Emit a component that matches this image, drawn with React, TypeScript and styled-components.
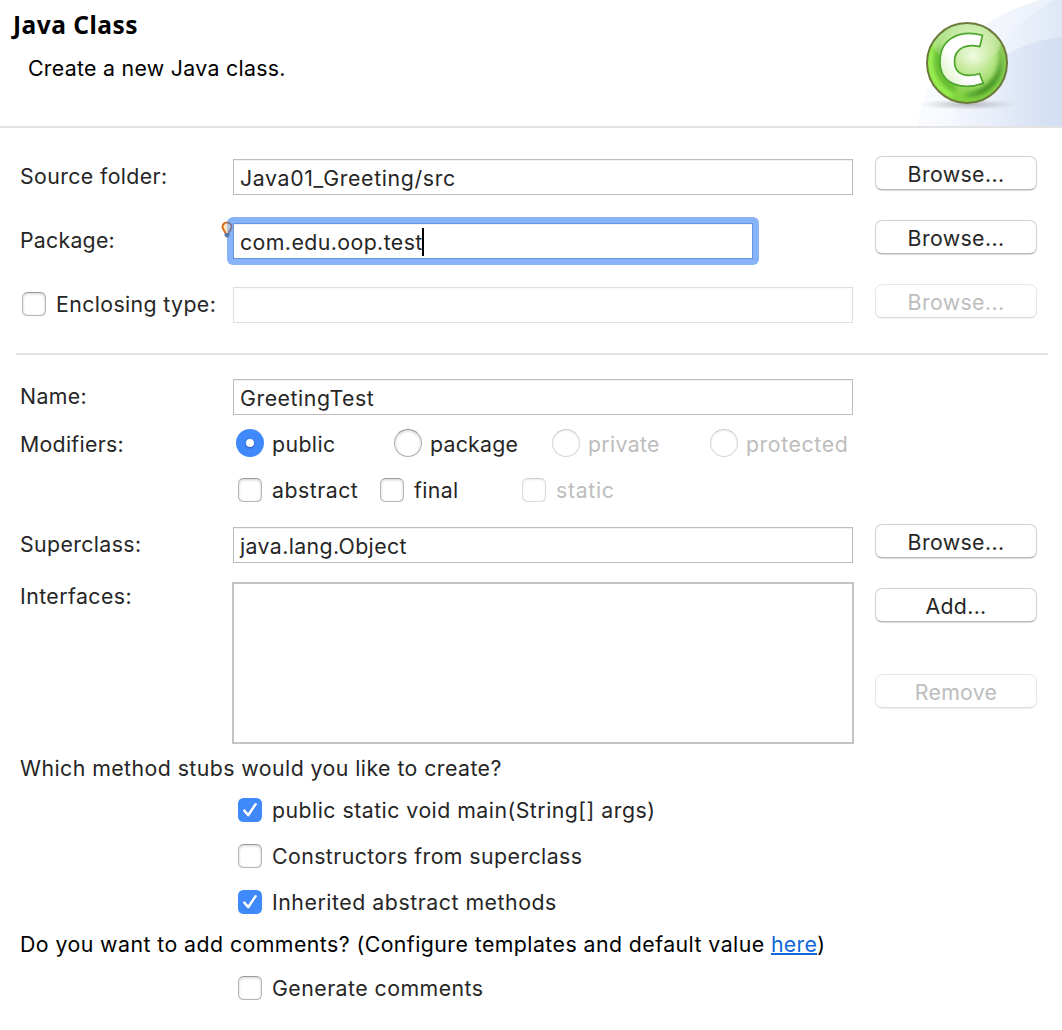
import React from "react";
import styled, { createGlobalStyle } from "styled-components";

const GlobalStyle = createGlobalStyle`
  *, *::before, *::after { box-sizing: border-box; }
  body {
    margin: 0;
    background: #ffffff;
    color: #262626;
    font-family: Inter, "Liberation Sans", sans-serif;
    font-size: 21.3px;
  }
`;

const Dialog = styled.main`
  width: 1062px;
  height: 1030px;
  overflow: hidden;
  background: #fff;
`;

const Header = styled.header`
  display: flex;
  justify-content: space-between;
  height: 128px;
  border-bottom: 2px solid #e3e3e3;
  color: #000;
`;

const Heading = styled.div`
  display: flex;
  flex-direction: column;
  gap: 14px;
  padding-top: 8px;
`;

const Title = styled.h1`
  margin: 0;
  padding-left: 13px;
  font: bold 24.5px/33px "Noto Sans", "Open Sans", sans-serif;
  letter-spacing: 0.5px;
`;

const Subtitle = styled.p`
  margin: 0;
  padding-left: 28px;
  line-height: 26px;
  letter-spacing: 0.3px;
`;

const Banner = styled.svg`
  display: block;
  width: 182px;
  height: 126px;
`;

const Form = styled.div`
  padding-top: 31px;
`;

const Row = styled.div<{ $height: number }>`
  display: grid;
  grid-template-columns: 213px 620px 184px;
  align-items: start;
  height: ${(p) => p.$height}px;
  padding-left: 20px;

  & > :nth-child(3) { margin-left: 22px; }
`;

const Label = styled.span<{ $track?: number; $shift?: number }>`
  margin-top: ${(p) => p.$shift ?? -1}px;
  line-height: 36px;
  letter-spacing: ${(p) => p.$track ?? 0.4}px;
  white-space: nowrap;
`;

const Field = styled.div<{ $track?: number; $disabled?: boolean }>`
  height: 36px;
  padding: 1px 6px 0;
  border: 1px solid ${(p) => (p.$disabled ? "#dfdfdf" : "#bdbdbd")};
  box-shadow: inset 0 1px 0 ${(p) => (p.$disabled ? "#fafafa" : "#f1f1f1")};
  line-height: 34px;
  letter-spacing: ${(p) => p.$track ?? 0.4}px;
  white-space: nowrap;
`;

const FocusRing = styled.div`
  position: relative;
  width: 532px;
  height: 48px;
  margin: -6px 0 0 -6px;
  padding: 6px;
  border-radius: 6px;
  background: #87b3f9;
`;

const FocusedField = styled(Field)`
  display: flex;
  border-color: #6795de;
  background: #fff;
`;

const Caret = styled.span`
  width: 2px;
  height: 28px;
  margin: 3px 0 0 -0.4px;
  background: #000;
`;

const Hint = styled.svg`
  position: absolute;
  left: -6px;
  top: 4px;
  width: 12px;
  height: 18px;
`;

const Button = styled.button<{ $track?: number }>`
  width: 162px;
  height: 34px;
  margin-top: -3px;
  padding: 0;
  border: 1px solid #d2d2d2;
  border-bottom-color: #b9b9b9;
  border-radius: 7px;
  background: #fff;
  box-shadow: 0 1px 1px rgba(0, 0, 0, 0.14);
  color: #262626;
  font: inherit;
  line-height: 34px;
  letter-spacing: ${(p) => p.$track ?? 0.37}px;

  &:disabled {
    border-color: #e7e7e7;
    border-bottom-color: #dcdcdc;
    box-shadow: 0 1px 1px rgba(0, 0, 0, 0.06);
    color: #bdbdbd;
  }
`;

const ButtonColumn = styled.div`
  display: flex;
  flex-direction: column;
  gap: 55px;
  padding-top: 9px;
`;

const Divider = styled.hr`
  height: 2px;
  margin: 2px 14px 24px 16px;
  border: 0;
  background: #e3e3e3;
`;

const ListBox = styled.div`
  height: 162px;
  margin: 0 -1px;
  border: 2px solid #c3c3c3;
`;

const Options = styled.div<{ $pitch: number; $inset: number }>`
  display: grid;
  grid-auto-flow: column;
  grid-auto-columns: ${(p) => p.$pitch}px;
  justify-content: start;
  padding-left: ${(p) => p.$inset}px;
`;

const Option = styled.label<{ $disabled?: boolean; $radio?: boolean; $track?: number }>`
  display: flex;
  align-items: flex-start;
  gap: ${(p) => (p.$radio ? 8 : 10)}px;
  color: ${(p) => (p.$disabled ? "#bdbdbd" : "inherit")};
  line-height: ${(p) => (p.$radio ? 30 : 24)}px;
  letter-spacing: ${(p) => p.$track ?? 0.42}px;
  white-space: nowrap;
`;

const EnclosingCell = styled.div`
  padding: 5px 0 0 2px;
`;

const Box = styled.span<{ $checked?: boolean; $disabled?: boolean }>`
  display: grid;
  place-items: center;
  flex: none;
  width: 24px;
  height: 24px;
  border: ${(p) => (p.$checked ? 0 : 1)}px solid ${(p) => (p.$disabled ? "#d9d9d9" : "#b5b5b5")};
  border-top-color: ${(p) => (p.$disabled ? "#cfcfcf" : "#9c9c9c")};
  border-radius: 5.5px;
  background: ${(p) => (p.$checked ? "#3f89fa" : "#fff")};
  box-shadow: ${(p) => (p.$checked ? "none" : p.$disabled ? "inset 0 1px 2px #eaeaea" : "inset 0 1px 3px #cfcfcf")};
`;

const Dot = styled.span<{ $checked?: boolean; $disabled?: boolean }>`
  display: flex;
  align-items: center;
  justify-content: center;
  flex: none;
  width: 28px;
  height: 28px;
  border: ${(p) => (p.$checked ? 0 : 1)}px solid ${(p) => (p.$disabled ? "#d6d6d6" : "#adadad")};
  border-top-color: ${(p) => (p.$disabled ? "#cccccc" : "#969696")};
  border-radius: 50%;
  background: ${(p) => (p.$checked ? "#3f89fa" : "#fff")};
  box-shadow: ${(p) => (p.$checked ? "none" : p.$disabled ? "inset 0 1px 2px #eaeaea" : "inset 0 1px 3px #cfcfcf")};

  &::after {
    content: "";
    width: 8px;
    height: 8px;
    border-radius: 50%;
    background: #fff;
    box-shadow: ${(p) => (p.$checked ? "0 1px 2px rgba(0, 40, 120, 0.5)" : "none")};
  }
`;

const Question = styled.p<{ $dark?: boolean; $track: number }>`
  margin: 0;
  padding-left: 20px;
  line-height: 24px;
  letter-spacing: ${(p) => p.$track}px;
  color: ${(p) => (p.$dark ? "#000" : "inherit")};
  white-space: nowrap;
`;

const Link = styled.a`
  color: #1068d8;
  letter-spacing: 0.28px;
  text-decoration: underline;
  text-decoration-thickness: 2px;
  text-underline-offset: 1px;
  text-decoration-skip-ink: none;
`;

const Stubs = styled.div`
  display: flex;
  flex-direction: column;
  gap: 22px;
  padding: 18px 0 18px 238px;
`;

const Comments = styled.div`
  padding: 20px 0 0 238px;
`;

const MethodArea = styled.section`
  padding-top: 12px;
`;

type OptionProps = { text: string; checked?: boolean; disabled?: boolean; track?: number };

function CheckOption({ text, checked, disabled, track }: OptionProps) {
  return (
    <Option $disabled={disabled} $track={track}>
      <Box $checked={checked} $disabled={disabled}>
        {checked && (
          <svg width="24" height="24" viewBox="0 0 24 24" fill="none">
            <path d="M6.3 13.4 10.2 18.2 17.8 7.2" stroke="#1f62c8" strokeOpacity=".4" strokeWidth="2.6" />
            <path d="M6.3 12.6 10.2 17.2 17.6 6.2" stroke="#fff" strokeWidth="2.5" strokeLinecap="round" strokeLinejoin="round" />
          </svg>
        )}
      </Box>
      <span>{text}</span>
    </Option>
  );
}

function RadioOption({ text, checked, disabled, track }: OptionProps) {
  return (
    <Option $radio $disabled={disabled} $track={track}>
      <Dot $checked={checked} $disabled={disabled} />
      <span>{text}</span>
    </Option>
  );
}

function ClassBanner() {
  return (
    <Banner viewBox="0 0 182 126">
      <defs>
        <linearGradient id="sky" x1="38" x2="182" y1="0" y2="0" gradientUnits="userSpaceOnUse">
          <stop offset="0" stopColor="#f9fbff" />
          <stop offset=".55" stopColor="#f3f6fd" />
          <stop offset="1" stopColor="#e9eff9" />
        </linearGradient>
        <linearGradient id="skyDeep" x1="70" x2="182" y1="0" y2="0" gradientUnits="userSpaceOnUse">
          <stop offset="0" stopColor="#d2def2" stopOpacity="0" />
          <stop offset="1" stopColor="#cedbf1" stopOpacity=".75" />
        </linearGradient>
        <linearGradient id="skyEdge" x1="120" x2="182" y1="0" y2="0" gradientUnits="userSpaceOnUse">
          <stop offset="0" stopColor="#dfe7f6" stopOpacity=".1" />
          <stop offset="1" stopColor="#d3dff3" stopOpacity=".5" />
        </linearGradient>
        <radialGradient id="ball" cx="93" cy="56" r="56" gradientUnits="userSpaceOnUse">
          <stop offset="0" stopColor="#eefadd" />
          <stop offset=".32" stopColor="#c0e894" />
          <stop offset=".62" stopColor="#8ed552" />
          <stop offset="1" stopColor="#70d02a" />
        </radialGradient>
        <linearGradient id="gloss" x1="0" x2="0" y1="22" y2="72" gradientUnits="userSpaceOnUse">
          <stop offset="0" stopColor="#fff" stopOpacity=".5" />
          <stop offset="1" stopColor="#fff" stopOpacity="0" />
        </linearGradient>
        <linearGradient id="letter" x1="60" x2="92" y1="70" y2="50" gradientUnits="userSpaceOnUse">
          <stop offset="0" stopColor="#def3ca" />
          <stop offset=".45" stopColor="#fff" />
        </linearGradient>
        <radialGradient id="shade">
          <stop offset="0" stopColor="#777" stopOpacity=".5" />
          <stop offset=".5" stopColor="#999" stopOpacity=".3" />
          <stop offset="1" stopColor="#aaa" stopOpacity="0" />
        </radialGradient>
        <filter id="soft" x="-30%" y="-30%" width="160%" height="160%">
          <feGaussianBlur stdDeviation="2.6" />
        </filter>
        <clipPath id="ballClip">
          <circle cx="87" cy="63" r="40" />
        </clipPath>
      </defs>
      <path d="M38 126C42 76 84 22 160 0H182V126Z" fill="url(#sky)" />
      <path d="M70 126C96 72 124 28 174 0H182V126Z" fill="url(#skyEdge)" />
      <path d="M60 126C78 84 120 44 182 37V126Z" fill="url(#skyDeep)" />
      <ellipse cx="88" cy="104.500" rx="50" ry="5.500" fill="url(#shade)" />
      <circle cx="87" cy="63" r="40" fill="url(#ball)" />
      <g clipPath="url(#ballClip)">
        <path d="M118 40C127 70 110 92 82 95C100 100 118 88 122 68C123 58 122 48 118 40Z" fill="#2b7d13" filter="url(#soft)" />
        <path d="M53 44C44 68 54 88 72 96" stroke="#9df553" strokeWidth="6" fill="none" filter="url(#soft)" />
        <path d="M60 46C54 66 60 82 76 90" stroke="#4fae20" strokeWidth="4" fill="none" filter="url(#soft)" />
        <ellipse cx="87" cy="43" rx="34" ry="21" fill="url(#gloss)" />
      </g>
      <circle cx="87" cy="63" r="40" fill="none" stroke="#6b7a3b" strokeWidth="2" />
      <path
        d="M102.5 35.3 99.8 46.6C88 43.6 74.5 47 74.5 61.5C74.5 75.5 87 77.5 99.6 73.7L103.3 83.4C85 89.7 60 87 60 61.5C60 38 80 29.5 102.5 35.3Z"
        fill="url(#letter)"
        stroke="#4da62b"
        strokeWidth="1.7"
        strokeLinejoin="round"
      />
    </Banner>
  );
}

function ContentAssistHint() {
  return (
    <Hint viewBox="0 0 12 18" fill="none">
      <path d="M6 2.2C3.800 2.200 2.200 3.800 2.200 6 2.200 8 4.500 8.500 4.600 12H6Z" fill="#ffe9c4" />
      <path d="M6 2.2C8.200 2.200 9.800 3.800 9.800 6 9.800 8 7.500 8.500 7.400 12H6Z" fill="#b4c6e6" />
      <path d="M4.200 12C4 9.500 1.500 8.600 1.500 6A4.500 4.500 0 0 1 6 1.500" stroke="#d96f1c" strokeWidth="2" />
      <path d="M7.800 12C8 9.500 10.500 8.600 10.500 6A4.500 4.500 0 0 0 6 1.500" stroke="#80798c" strokeWidth="2" />
      <path d="M3.600 12H8.400V14.500L6.800 16.500H5.200L3.600 14.500Z" fill="#56749f" />
    </Hint>
  );
}

export default function App() {
  return (
    <Dialog>
      <GlobalStyle />
      <Header>
        <Heading>
          <Title>Java Class</Title>
          <Subtitle>Create a new Java class.</Subtitle>
        </Heading>
        <ClassBanner />
      </Header>
      <Form>
        <Row $height={64}>
          <Label $track={0.39}>Source folder:</Label>
          <Field $track={0.65}>Java01_Greeting/src</Field>
          <Button>Browse...</Button>
        </Row>
        <Row $height={64}>
          <Label $track={0.24}>Package:</Label>
          <FocusRing>
            <FocusedField $track={0.42}>
              com.edu.oop.test
              <Caret />
            </FocusedField>
            <ContentAssistHint />
          </FocusRing>
          <Button>Browse...</Button>
        </Row>
        <Row $height={64}>
          <EnclosingCell>
            <CheckOption text="Enclosing type:" track={0.38} />
          </EnclosingCell>
          <Field $disabled />
          <Button disabled>Browse...</Button>
        </Row>
        <Divider />
        <Row $height={50}>
          <Label $track={0.36}>Name:</Label>
          <Field $track={0.55}>GreetingTest</Field>
        </Row>
        <Row $height={49}>
          <Label $track={0.29} $shift={-3}>Modifiers:</Label>
          <Options $pitch={158} $inset={3}>
            <RadioOption text="public" checked track={0.4} />
            <RadioOption text="package" track={0.24} />
            <RadioOption text="private" disabled track={0.32} />
            <RadioOption text="protected" disabled track={0.58} />
          </Options>
        </Row>
        <Row $height={49}>
          <span />
          <Options $pitch={142} $inset={5}>
            <CheckOption text="abstract" track={0.5} />
            <CheckOption text="final" track={0.34} />
            <CheckOption text="static" disabled track={0.66} />
          </Options>
        </Row>
        <Row $height={55}>
          <Label $track={0.38}>Superclass:</Label>
          <Field $track={0.38}>java.lang.Object</Field>
          <Button>Browse...</Button>
        </Row>
        <Row $height={162}>
          <Label $track={0.43} $shift={-4}>Interfaces:</Label>
          <ListBox />
          <ButtonColumn>
            <Button $track={0.33}>Add...</Button>
            <Button $track={0.28} disabled>Remove</Button>
          </ButtonColumn>
        </Row>
        <MethodArea>
          <Question $track={0.44}>Which method stubs would you like to create?</Question>
          <Stubs>
            <CheckOption text="public static void main(String[] args)" checked track={0.475} />
            <CheckOption text="Constructors from superclass" track={0.43} />
            <CheckOption text="Inherited abstract methods" checked track={0.53} />
          </Stubs>
          <Question $dark $track={0.441}>
            Do you want to add comments? (Configure templates and default value <Link>here</Link>)
          </Question>
          <Comments>
            <CheckOption text="Generate comments" track={0.46} />
          </Comments>
        </MethodArea>
      </Form>
    </Dialog>
  );
}
